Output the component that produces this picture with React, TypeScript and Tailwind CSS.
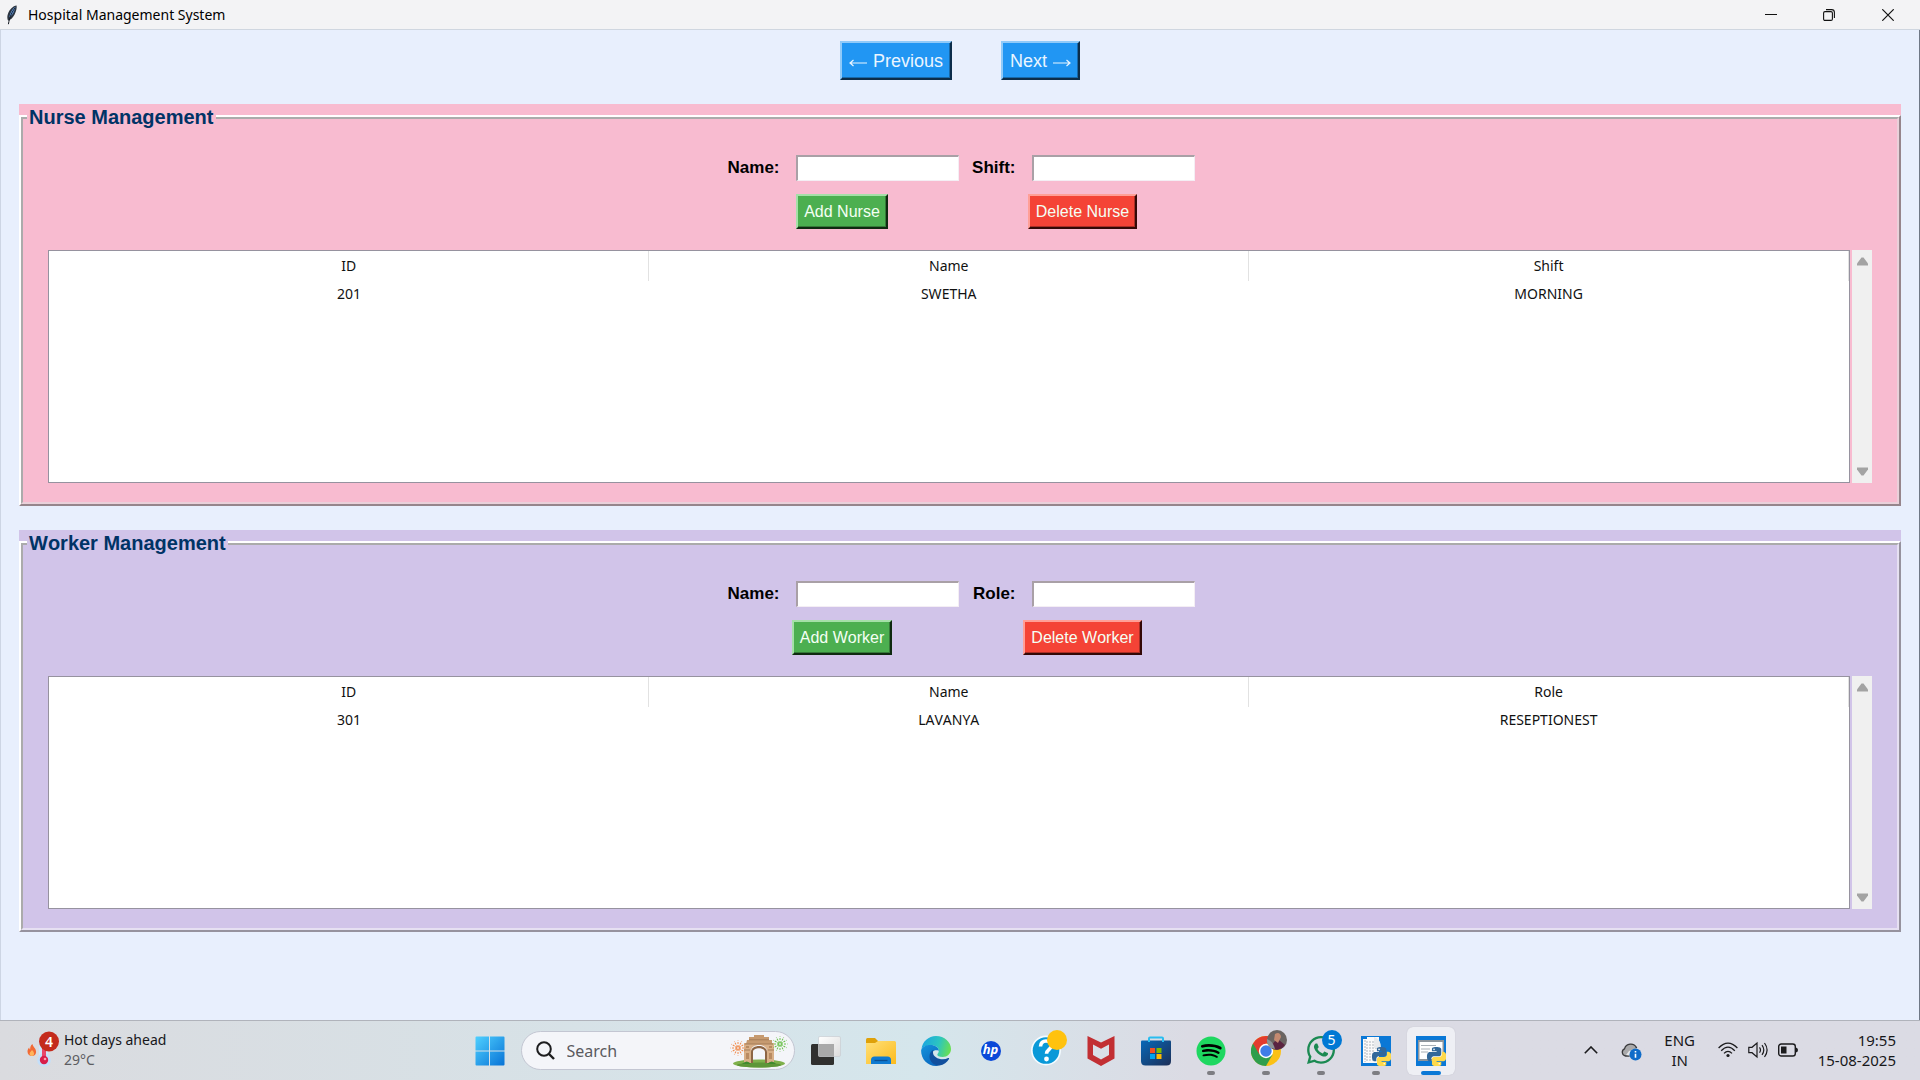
import { useId } from "react";
import type { ReactNode } from "react";
import { FaSpotify, FaWhatsapp } from "react-icons/fa";

/* ---------- window chrome ---------- */

function FeatherIcon() {
  return (
    <svg width="12" height="20" viewBox="0 0 12 20" aria-hidden="true">
      <path d="M10.6.6C7 1 3.4 4.6 1.8 9.2c-.8 2.6-.6 4.8.4 6.6 2.4-.8 5-3.2 6.4-6.2C10.2 6.2 11 3 10.6.6z" fill="#2b3440" />
      <path d="M9.6 1.8C6.6 3.4 4.3 7.2 3.2 12.4c2.2-1.4 4-3.6 5-6.4.8-1.8 1.2-3.2 1.4-4.2z" fill="#5f97de" />
      <path d="M9.2 2.8C6.4 6.2 3.6 11.6 2.4 19.2" fill="none" stroke="#151a22" strokeWidth="1" />
    </svg>
  );
}

function TitleBar() {
  return (
    <header className="flex h-[30px] shrink-0 items-center border-b border-[#cfd6e0] bg-[#f3f3f5] pl-1.5">
      <FeatherIcon />
      <h1 className="ml-2.5 flex-1 text-[14px] leading-5 text-black">Hospital Management System</h1>
      <button type="button" aria-label="Minimize" className="flex h-full w-[58px] items-center justify-center">
        <svg width="12" height="12" viewBox="0 0 12 12"><path d="M0 5.5h12" stroke="#111" strokeWidth="1" /></svg>
      </button>
      <button type="button" aria-label="Restore" className="flex h-full w-[58px] items-center justify-center">
        <svg width="12" height="12" viewBox="0 0 12 12" fill="none" stroke="#111" strokeWidth="1.1">
          <rect x=".6" y="2.6" width="8.8" height="8.8" rx="1.4" />
          <path d="M3 .6h5.6a2.8 2.8 0 0 1 2.8 2.8V9" />
        </svg>
      </button>
      <button type="button" aria-label="Close" className="mr-0.5 flex h-full w-[60px] items-center justify-center">
        <svg width="12" height="12" viewBox="0 0 12 12"><path d="M.3.3l11.4 11.4M11.7.3L.3 11.7" stroke="#111" strokeWidth="1.2" /></svg>
      </button>
    </header>
  );
}

/* ---------- management panels ---------- */

function NavButton({ children }: { children: ReactNode }) {
  return (
    <button
      type="button"
      className="flex h-[39px] items-center gap-1.5 border-2 border-t-[#90caf9] border-r-[#0c2d4a] border-b-[#0c2d4a] border-l-[#90caf9] bg-[#2196f3] px-[7px] text-lg leading-6 text-[#eaf5ff] shadow-[inset_-1px_-1px_0_#1769aa]"
    >
      {children}
    </button>
  );
}

function Arrow({ back = false }: { back?: boolean }) {
  return (
    <svg width="18" height="10" viewBox="0 0 18 10" fill="none" stroke="currentColor" strokeWidth="1.2" aria-hidden="true" className="mt-1">
      <path d={back ? "M18 5H1M4.5 2L1 5l3.5 3" : "M0 5h17M13.5 2L17 5l-3.5 3"} />
    </svg>
  );
}

function Field({ label, wide = false }: { label: string; wide?: boolean }) {
  const id = useId();
  return (
    <div className="flex items-center">
      <label htmlFor={id} className={(wide ? "w-[70px]" : "w-[61px]") + " pr-4 text-right text-[17px] leading-5 font-bold text-black"}>
        {label}
      </label>
      <input
        id={id}
        type="text"
        className="h-[26px] w-[163px] border-t-2 border-r border-b border-l-2 border-t-[#a9a0a6] border-r-[#f4eef4] border-b-[#f4eef4] border-l-[#a9a0a6] bg-white px-1 text-base outline-none"
      />
    </div>
  );
}

const actionBase = "h-[35px] border-2 px-1.5 text-base leading-5 text-[#f4fff4] ";
const addStyle = "border-t-[#a5e0a8] border-r-[#0f2a10] border-b-[#0f2a10] border-l-[#a5e0a8] bg-[#4caf50] shadow-[inset_-1px_-1px_0_#357a38]";
const deleteStyle = "border-t-[#ff9f97] border-r-[#330806] border-b-[#330806] border-l-[#ff9f97] bg-[#f44336] shadow-[inset_-1px_-1px_0_#aa2e25]";

function ScrollBar() {
  return (
    <div className="ml-0.5 flex w-5 flex-col items-center justify-between bg-[#f0f0f0] py-[7px]">
      <button type="button" aria-label="Scroll up">
        <svg width="11" height="9" viewBox="0 0 11 9" className="block"><path d="M4.5.5h2L11 6.5V8.500H0v-2z" fill="#a3a3a3" /></svg>
      </button>
      <button type="button" aria-label="Scroll down">
        <svg width="11" height="9" viewBox="0 0 11 9" className="block"><path d="M4.5 8.5h2L11 2.5V.5H0v2z" fill="#a3a3a3" /></svg>
      </button>
    </div>
  );
}

type PanelProps = {
  title: string;
  noun: string;
  second: string;
  rows: string[][];
  tone: string;
  edge: string;
};

function Panel({ title, noun, second, rows, tone, edge }: PanelProps) {
  return (
    <section className={tone}>
      <fieldset className={"min-w-0 border-4 border-white px-[25px] pt-[25px] pb-[19px] [border-style:ridge] [font-kerning:none] " + edge}>
        <legend className="-ml-[21px] px-0.5 text-xl leading-[26px] font-bold text-[#003366]">{title}</legend>
        <div className="flex justify-center gap-3">
          <div className="flex flex-col items-center gap-[13px]">
            <Field label="Name:" wide />
            <button type="button" className={actionBase + addStyle}>Add {noun}</button>
          </div>
          <div className="flex flex-col items-center gap-[13px]">
            <Field label={second + ":"} />
            <button type="button" className={actionBase + deleteStyle}>Delete {noun}</button>
          </div>
        </div>
        <div className="mt-[21px] flex h-[233px]">
          <div className="flex-1 border border-[#96929f] bg-white font-[Noto_Sans,sans-serif] text-sm leading-5 text-[#111]">
            <table className="w-full table-fixed border-collapse text-center">
              <thead>
                <tr className="h-[30px]">
                  {["ID", "Name", second].map((h) => (
                    <th key={h} scope="col" className="border-r border-[#e2e2e2] p-0 font-normal">{h}</th>
                  ))}
                </tr>
              </thead>
              <tbody>
                {rows.map((row) => (
                  <tr key={row[0]} className="h-[25px]">
                    {row.map((cell) => (
                      <td key={cell} className="p-0">{cell}</td>
                    ))}
                  </tr>
                ))}
              </tbody>
            </table>
          </div>
          <ScrollBar />
        </div>
      </fieldset>
    </section>
  );
}

/* ---------- taskbar icons ---------- */

function WeatherIcon() {
  return (
    <svg width="34" height="38" viewBox="0 0 34 38" aria-hidden="true">
      <rect x="12" y="6" width="9" height="24" rx="4.5" fill="#cfe6fb" />
      <circle cx="17" cy="29" r="6.8" fill="#c3dffa" />
      <path d="M17 12v16" stroke="#e8476a" strokeWidth="4" />
      <circle cx="17" cy="29" r="4.2" fill="#d81e4a" />
      <circle cx="18" cy="28" r="1.3" fill="#ff9db0" />
      <path d="M5.5 13c.3 3 3.6 4.200 3.600 8A4.300 4.300 0 0 1 4.800 25 4.300 4.300 0 0 1 .5 20.600c0-1.800.8-3 1.700-4 .1 1.200.4 1.600 1 2C3 16.500 3.600 14.200 5.500 13z" fill="#f26a35" />
      <path d="M5 19c1.400 1.400 2 2.200 2 3.600A2.200 2.200 0 0 1 4.800 25a2.200 2.200 0 0 1-2.200-2.300C2.600 21.500 4 20.500 5 19z" fill="#ffb45c" />
      <circle cx="22" cy="10.5" r="10" fill="#c42b1c" />
    </svg>
  );
}

function WindowsIcon() {
  return (
    <svg width="30" height="30" viewBox="0 0 30 30">
      <defs>
        <linearGradient id="win" x1="0" y1="0" x2="1" y2="1">
          <stop offset="0" stopColor="#4fd0ff" /><stop offset="1" stopColor="#0873d6" />
        </linearGradient>
      </defs>
      <path fill="url(#win)" d="M1.5.5H14v14H.5v-13a1 1 0 0 1 1-1zM15 .5h13.5a1 1 0 0 1 1 1v13H15zM.5 15.5H14v14H1.500a1 1 0 0 1-1-1zM15 15.5h14.5v13a1 1 0 0 1-1 1H15z" />
    </svg>
  );
}

const RAYS = [0, 30, 60, 90, 120, 150, 180, 210, 240, 270, 300, 330];

function Burst({ x, y, color }: { x: number; y: number; color: string }) {
  return (
    <g stroke={color} strokeWidth="1" strokeDasharray="2 1">
      {RAYS.map((a) => (
        <path key={a} d={`M${x} ${y - 1}v-6.5`} transform={`rotate(${a} ${x} ${y})`} />
      ))}
    </g>
  );
}

function GateArt() {
  return (
    <svg width="58" height="34" viewBox="0 0 58 34" aria-hidden="true">
      <ellipse cx="29" cy="29.5" rx="26" ry="4" fill="#7fb04c" />
      <ellipse cx="29" cy="31" rx="22" ry="2.5" fill="#5d9638" />
      <path d="M21 29V17c0-8 16-8 16 0v12h7V9H14v20z" fill="#d9b088" />
      <path d="M21 29V18c0-8 16-8 16 0v11h-2V18c0-5-12-5-12 0v11z" fill="#8d6544" />
      <path d="M17 6h25v4H16zM19 3h20v3H19zM24 1h10v2H24z" fill="#c69a70" />
      <path d="M15 10h28M19 5.8h20M14 16h6M38 16h6" stroke="#a57c58" strokeWidth="1" />
      <path d="M16 12h3v2h-3zM39 12h3v2h-3zM16 19h3v6h-3zM39 19h3v6h-3z" fill="#b98b62" />
      <path d="M12 30q5-5 9 0zM37 30q5-5 9 0z" fill="#3f8a2e" />
      <Burst x={8} y={14} color="#f08a4b" />
      <Burst x={50} y={10} color="#6ac04a" />
    </svg>
  );
}

function TaskViewIcon() {
  return (
    <svg width="30" height="30" viewBox="0 0 30 30">
      <defs>
        <linearGradient id="tv" x1="0" y1="0" x2="1" y2="1"><stop offset="0" stopColor="#fff" /><stop offset="1" stopColor="#dcdcdc" /></linearGradient>
      </defs>
      <rect x="0" y="8" width="23" height="21" rx="1.5" fill="#30302f" />
      <rect x="7.5" y=".5" width="22" height="20" rx="1.5" fill="url(#tv)" stroke="#c9cdd2" strokeWidth=".7" />
      <path d="M7.5 8H23v12.500H7.500z" fill="#a9a9a9" />
    </svg>
  );
}

function FolderIcon() {
  return (
    <svg width="30" height="28" viewBox="0 0 30 28">
      <defs>
        <linearGradient id="fold" x1="0" y1="0" x2="1" y2="1"><stop offset="0" stopColor="#ffe07a" /><stop offset="1" stopColor="#fcbb1c" /></linearGradient>
      </defs>
      <path d="M0 2.5Q0 1 1.5 1H9l3 3v5H0z" fill="#dfa109" />
      <path d="M0 6h9l3-2h16.5Q30 4 30 5.5V27H0z" fill="url(#fold)" />
      <path d="M5 27v-4q0-3.5 3.5-3.5h13Q25 19.500 25 23v4z" fill="#0f7ad1" />
      <path d="M8.5 23.5h13" stroke="#0a4f93" strokeWidth="1.3" />
    </svg>
  );
}

function EdgeIcon() {
  return (
    <svg width="30" height="30" viewBox="0 0 30 30">
      <defs>
        <linearGradient id="eTop" x1="0" y1=".4" x2="1" y2=".6"><stop offset="0" stopColor="#1ba6e0" /><stop offset=".55" stopColor="#2cc5c0" /><stop offset="1" stopColor="#6be04f" /></linearGradient>
        <linearGradient id="eLeft" x1="0" y1="0" x2=".6" y2="1"><stop offset="0" stopColor="#1494dc" /><stop offset="1" stopColor="#0b69c0" /></linearGradient>
      </defs>
      <path d="M.5 13C1.5 5.500 7.500 0 15 0c8.500 0 15 6.200 15 13 0 4.600-3.600 8-8.300 8-3.700 0-5.400-1.200-5.400-2.300 0-1 1.500-1.500 1.500-4 0-3-3.300-5.400-7.300-5.400C5.500 9.300 1.800 11 .5 13z" fill="url(#eTop)" />
      <path d="M.1 14.500C.8 11 4.800 9 9.500 9c4.700 0 8.300 2.700 8.300 5.700-4.500-1.700-8 1.300-8 5.300 0 4.700 4 8.800 8.700 9.600-1.100.3-2.300.4-3.500.4C6.500 30 0 23 .1 14.500z" fill="url(#eLeft)" />
      <path d="M12.500 13.800c-2.200 1-4 3.300-4 6.700 0 5 4.700 9.500 10 9.100 4.200-.8 7.700-3.500 9.500-6.700.4-.7-.2-1.200-.9-.8-1.500.8-3.300 1.200-5.100 1.200-5.500 0-10-3-10-6.800 0-1 .2-2 .5-2.700z" fill="#11509e" />
    </svg>
  );
}

function HpIcon() {
  return (
    <span className="flex size-5 items-center justify-center rounded-full bg-[#0a48d8] pb-0.5 text-[13px] leading-none font-bold text-white italic">hp</span>
  );
}

function HelpIcon() {
  return (
    <svg width="36" height="36" viewBox="0 0 36 36">
      <circle cx="15" cy="20.5" r="15" fill="#f4fbff" />
      <circle cx="15" cy="20.5" r="13.3" fill="#0a99d8" />
      <path d="M9.5 16.5c0-3.700 2.500-5.500 5.500-5.500s5.500 1.800 5.500 4.600c0 3.800-5 4-5 8.200" fill="none" stroke="#fff" strokeWidth="3.6" />
      <circle cx="15.5" cy="29" r="2.4" fill="#fff" />
      <circle cx="26" cy="10" r="10" fill="#ffc20e" />
    </svg>
  );
}

function ShieldIcon() {
  return (
    <svg width="28" height="30" viewBox="0 0 28 30">
      <path d="M.5 0L14 6.5 27.5 0v22.5L14 30 .5 22.5zM6 8.5V19l8 4.500 8-4.500V8.500L14 12.700z" fill="#c22f33" fillRule="evenodd" />
    </svg>
  );
}

function StoreIcon() {
  return (
    <svg width="30" height="30" viewBox="0 0 30 30">
      <defs>
        <linearGradient id="store" x1="0" y1="0" x2="1" y2="1"><stop offset="0" stopColor="#0768b8" /><stop offset="1" stopColor="#1d2f57" /></linearGradient>
      </defs>
      <path d="M0 5.5q0-1 1-1h28q1 0 1 1V25q0 4.500-4.500 4.500h-21Q0 29.500 0 25z" fill="url(#store)" />
      <path d="M8 6V2.500Q8 1.500 9 1.500h12q1 0 1 1V6" fill="none" stroke="#29bdf0" strokeWidth="2" />
      <path d="M9 12h5v5H9z" fill="#f25022" /><path d="M15.5 12h5v5h-5z" fill="#7fba00" />
      <path d="M9 18h5v5H9z" fill="#00a4ef" /><path d="M15.5 18h5v5h-5z" fill="#ffb900" />
    </svg>
  );
}

function ChromeIcon() {
  return (
    <svg width="36" height="36" viewBox="0 0 36 36">
      <g transform="translate(15 21)">
        <circle r="15" fill="#fbc116" />
        <path d="M0 0L-13 -7.5A15 15 0 0 0 0 15L6.5 3.750z" fill="#2f9e4d" />
        <path d="M-13 -7.5A15 15 0 0 1 13 -7.5H0L-6.500 3.750z" fill="#e33b2e" />
        <circle r="7.2" fill="#fff" />
        <circle r="5.7" fill="#3f7de8" />
      </g>
      <circle cx="26" cy="10" r="10" fill="#6a6461" />
      <path d="M20 18q3-9 8-8l6 5a10 10 0 0 1-14 3z" fill="#5a2440" />
      <path d="M24 4q5-3 6 3l-3 6-4-3z" fill="#c48a70" />
      <path d="M16 9q6 2 8 10l-4-1a10 10 0 0 1-4-9z" fill="#8b9496" />
    </svg>
  );
}

function WhatsAppBadge() {
  return (
    <span className="flex h-9 w-9 items-end">
      <span className="relative">
        <FaWhatsapp size={32} color="#1b8a52" className="-ml-px" />
        <span className="absolute -top-1 left-4 flex size-5 items-center justify-center rounded-full bg-[#0078d4] text-[14px] leading-none text-white">5</span>
      </span>
    </span>
  );
}

function PythonMark() {
  return (
    <g transform="translate(11 11) scale(.8)">
      <path fill="#32689a" d="M14.25.18l.9.2.73.26.59.3.45.32.34.34.25.34.16.33.1.3.04.26.02.2-.01.13V8.5l-.05.63-.13.55-.21.46-.26.38-.3.31-.33.25-.35.19-.35.14-.33.1-.3.07-.26.04-.21.02H8.77l-.69.05-.59.14-.5.22-.41.27-.33.32-.27.35-.2.36-.15.37-.1.35-.07.32-.04.27-.02.21v3.06H3.17l-.21-.03-.28-.07-.32-.12-.35-.18-.36-.26-.36-.36-.35-.46-.32-.59-.28-.73-.21-.88-.14-1.05-.05-1.23.06-1.22.16-1.04.24-.87.32-.71.36-.57.4-.44.42-.33.42-.24.4-.16.36-.1.32-.05.24-.01h8.38v-.83H6.18l-.01-2.75-.02-.37.05-.34.11-.31.17-.28.25-.26.31-.23.38-.2.44-.18.51-.15.58-.12.64-.1.71-.06.77-.04.84-.02 1.27.05z" />
      <path fill="#ffd94a" d="M21.04 6.11l.28.06.32.12.35.18.36.27.36.35.35.47.32.59.28.73.21.88.14 1.04.05 1.23-.06 1.23-.16 1.04-.24.86-.32.71-.36.57-.4.45-.42.33-.42.24-.4.16-.36.09-.32.05-.24.02h-8.38v.82h5.84l.01 2.76.02.36-.05.34-.11.31-.17.29-.25.25-.31.24-.38.2-.44.17-.51.15-.58.13-.64.09-.71.07-.77.04-.84.01-1.27-.04-1.07-.14-.9-.2-.73-.25-.59-.3-.45-.33-.34-.34-.25-.34-.16-.33-.1-.3-.04-.25-.02-.2.01-.13v-5.34l.05-.64.13-.54.21-.46.26-.38.3-.32.33-.24.35-.2.35-.14.33-.1.3-.06.26-.04.34-.03h5.84l.69-.05.59-.14.5-.21.41-.28.33-.32.27-.35.2-.36.15-.36.1-.35.07-.32.04-.28.02-.21V6.07h2.23z" />
      <circle cx="8.8" cy="3" r="1" fill="#fff" />
      <circle cx="15.3" cy="21" r="1" fill="#fff" />
    </g>
  );
}

function IdleIcon() {
  return (
    <svg width="30" height="30" viewBox="0 0 30 30">
      <path fill="#0a78d6" d="M0 0h30v30H0z" />
      <path d="M2 3h4V1h12v26H2z" fill="#fafafa" />
      <path d="M4 4v22M5 6h11M5 9h11M5 12h11M5 15h8M5 18h7M5 21h7M5 24h7" stroke="#aeb6bd" strokeWidth="1" strokeDasharray="2 1" />
      <path d="M13 1q7 2 7 11h-7z" fill="#e8eaec" />
      <PythonMark />
    </svg>
  );
}

function PythonWindowIcon() {
  return (
    <svg width="30" height="30" viewBox="0 0 30 30">
      <path fill="#0a78d6" d="M0 0h30v30H0z" />
      <path d="M2 4h26v21H2z" fill="#8d959c" />
      <path d="M3.5 6h23v17h-23z" fill="#fff" />
      <path d="M5 9.500h15M5 13h9M5 16h7" stroke="#a9b0b6" strokeWidth="1" />
      <PythonMark />
    </svg>
  );
}

function Slot({ label, running = false, active = false, children }: { label: string; running?: boolean; active?: boolean; children: ReactNode }) {
  return (
    <button
      type="button"
      aria-label={label}
      className={(active ? "bg-[#eeeff4] shadow-[0_0_1px_#b8b8c4] " : "") + "relative flex size-12 items-center justify-center rounded-md"}
    >
      {children}
      {running && <span className="absolute bottom-0 left-5 h-1 w-2 rounded-full bg-[#7d7d82]" />}
      {active && <span className="absolute bottom-0 left-3.5 h-1 w-5 rounded-full bg-[#0a78d6]" />}
    </button>
  );
}

function Taskbar() {
  return (
    <footer className="grid h-[60px] shrink-0 grid-cols-[1fr_auto_1fr] items-center border-t border-[#b0b3bb] bg-linear-to-r from-[#dadbdf] via-[#d5e6ec] via-48% to-[#dbdbe4] to-62% text-sm leading-5 text-[#17171a]">
      <button type="button" className="flex items-center gap-[3px] pb-0.5 pl-[27px] text-left">
        <span className="relative">
          <WeatherIcon />
          <span className="absolute top-0 left-3 w-5 text-center text-sm leading-[21px] font-semibold text-white">4</span>
        </span>
        <span>
          <span className="block">Hot days ahead</span>
          <span className="block text-[#5c5c62]">29°C</span>
        </span>
      </button>

      <nav aria-label="Taskbar" className="flex items-center gap-[7px]">
        <Slot label="Start"><WindowsIcon /></Slot>
        <div className="flex h-[39px] w-[274px] items-center rounded-full border border-[#c3c6d2] bg-[#f4f5f9] pr-1.5 pl-3.5">
          <svg width="19" height="19" viewBox="0 0 19 19" fill="none" stroke="#1d1d1f" strokeWidth="2" aria-hidden="true">
            <circle cx="8" cy="8" r="6.8" /><path d="M13 13l5 5" strokeWidth="2.4" />
          </svg>
          <input type="text" aria-label="Search" placeholder="Search" className="ml-3 min-w-0 flex-1 bg-transparent text-base placeholder-[#5a5a5e] outline-none" />
          <GateArt />
        </div>
        <Slot label="Task view"><TaskViewIcon /></Slot>
        <Slot label="File Explorer"><FolderIcon /></Slot>
        <Slot label="Edge"><EdgeIcon /></Slot>
        <Slot label="HP"><HpIcon /></Slot>
        <Slot label="Help"><span className="-mt-1.5 ml-1.5"><HelpIcon /></span></Slot>
        <Slot label="McAfee"><ShieldIcon /></Slot>
        <Slot label="Store"><StoreIcon /></Slot>
        <Slot label="Spotify" running>
          <span className="flex size-[26px] items-center justify-center rounded-full bg-black"><FaSpotify size={30} color="#1ed760" className="shrink-0" /></span>
        </Slot>
        <Slot label="Chrome" running><span className="-mt-1.5 ml-1.5"><ChromeIcon /></span></Slot>
        <Slot label="WhatsApp" running><span className="-mt-1.5 ml-1.5"><WhatsAppBadge /></span></Slot>
        <Slot label="IDLE" running><IdleIcon /></Slot>
        <Slot label="Python" active><PythonWindowIcon /></Slot>
      </nav>

      <div className="flex items-center justify-end pr-6 pb-0.5 text-[15px]">
        <button type="button" aria-label="Show hidden icons" className="mr-[23px]">
          <svg width="14" height="8" viewBox="0 0 14 8" fill="none" stroke="#1b1b1d" strokeWidth="1.6"><path d="M.8 7.200L7 1l6.200 6.200" /></svg>
        </button>
        <button type="button" aria-label="OneDrive" className="mt-1 mr-[22px]">
          <svg width="21" height="19" viewBox="0 0 21 19">
            <path d="M4.5 14A3.8 3.8 0 0 1 3.5 6.8 6.5 6.5 0 0 1 15.5 5.5L8 14z" fill="#a9a9ab" stroke="#3a3a3c" strokeWidth="1.3" />
            <path d="M5 13l3-4 7-3 2 3-6 5z" fill="#e6e6e8" />
            <circle cx="14.5" cy="12.5" r="6" fill="#0f6cc9" />
            <path d="M14.5 11.800v4M14.5 9v1.400" stroke="#fff" strokeWidth="1.6" />
          </svg>
        </button>
        <button type="button" aria-label="Language" className="mr-[22px] w-8 text-center">ENG<br />IN</button>
        <button type="button" aria-label="Network, volume and battery" className="mr-5 flex items-center gap-2.5">
          <svg width="20" height="16" viewBox="0 0 20 16" fill="none" stroke="#1b1b1d" strokeWidth="1.3">
            <path d="M.6 6Q10-3.800 19.400 6M3.200 8.800Q10 1.600 16.800 8.800M6 11.400q4-4 8 0" />
            <circle cx="10" cy="13.5" r="1.6" fill="#1b1b1d" stroke="none" />
          </svg>
          <svg width="20" height="18" viewBox="0 0 20 18" fill="none" stroke="#1b1b1d" strokeWidth="1.2">
            <path d="M.8 6.300H4L9 2v14l-5-4.300H.8z" /><path d="M11.5 6.300q2 2.700 0 5.400M14 4.200q3.600 4.800 0 9.600M16.500 2q5.200 7 0 14" />
          </svg>
          <svg width="20" height="14" viewBox="0 0 20 14">
            <rect x=".7" y="1" width="16.6" height="12" rx="2.6" fill="none" stroke="#1b1b1d" strokeWidth="1.4" />
            <path d="M3 3.500h5.500v7H3z" fill="#1b1b1d" /><path d="M18 4.500q2 .5 2 2.500t-2 2.500z" fill="#1b1b1d" />
          </svg>
        </button>
        <time dateTime="2025-08-15T19:55" className="text-right">19:55<br />15-08-2025</time>
      </div>
    </footer>
  );
}

export default function App() {
  return (
    <div className="flex min-h-screen flex-col bg-[#e8effd] font-[Noto_Sans,sans-serif]">
      <TitleBar />
      <main className="flex flex-1 flex-col gap-6 border-r border-l border-r-[#6f7886] border-l-[#cdd5e4] px-[18px] pt-[11px] font-[Liberation_Sans,sans-serif]">
        <nav aria-label="Pages" className="flex justify-center gap-[49px]">
          <NavButton><Arrow back />Previous</NavButton>
          <NavButton>Next<Arrow /></NavButton>
        </nav>
        <Panel
          title="Nurse Management"
          noun="Nurse"
          second="Shift"
          rows={[["201", "SWETHA", "MORNING"]]}
          tone="bg-[#f8bbd0]"
          edge="border-r-[#ead0da] border-b-[#ead0da]"
        />
        <Panel
          title="Worker Management"
          noun="Worker"
          second="Role"
          rows={[["301", "LAVANYA", "RESEPTIONEST"]]}
          tone="bg-[#d1c4e9]"
          edge="border-r-[#e6e0f2] border-b-[#e6e0f2]"
        />
      </main>
      <Taskbar />
    </div>
  );
}
